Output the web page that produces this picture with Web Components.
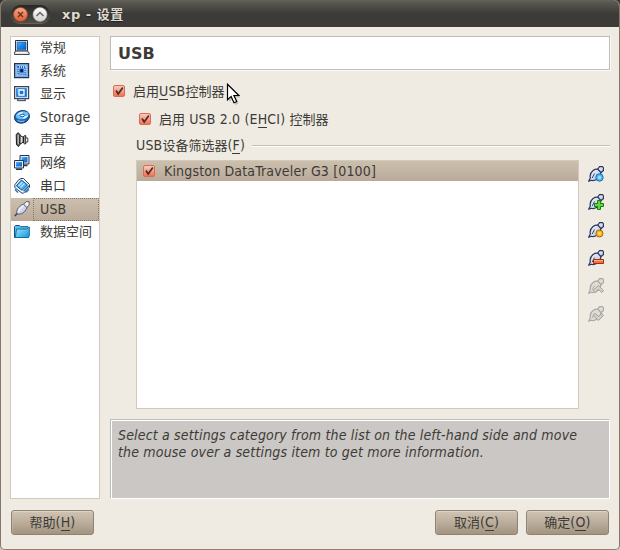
<!DOCTYPE html>
<html lang="zh-CN">
<head>
<meta charset="utf-8">
<title>xp - 设置</title>
<style>
html,body{margin:0;height:550px;overflow:hidden;background:linear-gradient(#3a3733 50%,#c9c6c0 50%)}
body{font:13px/17px "DejaVu Sans","Noto Sans CJK SC",sans-serif;color:#3c3b37}
</style>
</head>
<body>
<settings-window></settings-window>
<script>
const define=(name,html,init)=>customElements.define(name,class extends HTMLElement{
  constructor(){
    super();
    const t=document.createElement('template');
    t.innerHTML=html;
    this.attachShadow({mode:'open'}).append(t.content.cloneNode(true));
  }
  connectedCallback(){ if(init) init(this,this.shadowRoot); }
});

const defs=`<defs>
<linearGradient id="b" x1="0" y1="0" x2="1" y2="1"><stop offset="0" stop-color="#5cb4f8"/><stop offset=".5" stop-color="#1b83e6"/><stop offset="1" stop-color="#0a62c4"/></linearGradient>
<linearGradient id="c" x1="0" y1="0" x2="1" y2="1"><stop offset="0" stop-color="#a4f0fb"/><stop offset="1" stop-color="#1294dc"/></linearGradient>
<linearGradient id="g" x1="0" y1="0" x2="1" y2="1"><stop offset="0" stop-color="#fff"/><stop offset="1" stop-color="#aab4dc"/></linearGradient></defs>`;
const plug=(line,fill)=>`<g stroke="${line}" stroke-linejoin="round"><path d="M9.500 3.500L11.500.7h3.200l.8 1.300v2.500l-2.700 2.300z" fill="${fill}" stroke-width="1.200"/><path d="M.7 15.300L2.300 12c-.6-2.800.4-5.600 2.700-7.500 1.500-1 3.300-1.500 4.800-1.300l3 3.200c0 3-1.800 5.600-4.300 7.100-1.700 1-3.400 1.300-5 .8z" fill="${fill}" stroke-width="1.200"/><path d="M6.500 7.500L4.200 12" stroke-width=".9"/></g>`;
const icons={
general:`<path d="M1.500.5h12v10.500h-12z" fill="#f4f6fa" stroke="#26303f"/><path d="M3 2h9v7.500H3z" fill="url(#b)" stroke="#0b4a94" stroke-width=".6"/><path d="M1.500 11h12l1.700 2v1.500H.3V13z" fill="#d8dce4" stroke="#414753"/><path d="M2 12.800h11" stroke="#fff"/>`,
system:`<path d="M.6.6h14v14H.6z" fill="#8fbdf4" stroke="#26334a" stroke-width="1.200"/><path d="M2 2h11.200v11.200H2z" fill="#b5d6fa" stroke="#6f9fe0"/><path d="M4 4h7.200v7.200H4z" fill="none" stroke="#1f68cc" stroke-width="2" stroke-dasharray="1 1"/><path d="M5.800 5.800h3.600v3.600H5.800z" fill="#0b1220" stroke="#2f7ee0"/>`,
display:`<path d="M.6.6h14v12H.6z" fill="#e6ebf4" stroke="#39445a" stroke-width="1.200"/><path d="M2.500 2.500h10v8.200h-10z" fill="url(#b)" stroke="#3b83d8"/><path d="M5 4h5v5H5z" fill="#1674de" stroke="#fff" stroke-width="1.300"/><path d="M5 12.600h5l1.500 1v1.100h-8v-1.100z" fill="#bec4ce" stroke="#39445a"/>`,
storage:`<path d="M.5 8.500C.5 4 5 1.300 9.500 1.600c4 .3 6.200 2.900 5.900 5.900-.5 4.600-5 7-9.300 6.600C2.600 13.700.5 11.500.5 8.500z" fill="#1765b8" stroke="#16305b"/><ellipse cx="8.200" cy="6.300" rx="6.500" ry="3.900" transform="rotate(-10 8.200 6.300)" fill="#6bc0f8"/><path d="M3 5.500C5 3.500 7 3 9 3L8 5.500zM9 7.500l5-1c-.5 1.800-2.500 3-4.500 3.500z" fill="#d9f4ff"/><ellipse cx="8.300" cy="6.400" rx="2.300" ry="1.200" fill="#fff" stroke="#155cae"/><path d="M3.500 11.300c2 1.500 5 1.500 7 .5" stroke="#8bd4ff" fill="none"/>`,
audio:`<path d="M2.200 2.500L4.300.7l1.700 2v9.600l-1.500 2.200-2-1.800z" fill="#696969" stroke="#161616"/><path d="M4.200 3v9" stroke="#d5d5d5"/><path d="M6 3.500l3.200 1.700v5L6 12z" fill="#ddd" stroke="#222"/><path d="M9.500 4.500l1-.8h1.300v8.100h-1.300l-1-.8z" fill="#999" stroke="#222"/><path d="M12 6h1.800v4H12" fill="#eee" stroke="#444"/>`,
network:`<path d="M6 .5h9v8.500H6z" fill="#e7edf6" stroke="#26334a"/><path d="M7.500 2H13.500v5.500h-6z" fill="url(#b)"/><path d="M9 10.500h4.500" stroke="#26334a" stroke-width="1.500"/><path d="M.5 5.500h9V13h-9z" fill="#e7edf6" stroke="#26334a"/><path d="M2 7h6v4.500H2z" fill="url(#b)"/><path d="M2 14.300h6" stroke="#26334a" stroke-width="1.400"/>`,
serial:`<path d="M4.500 2L7 .5h2.500l6 6v2.700l-6 6H8L.8 9.500V6.800z" fill="#f5f9ff" stroke="#23406b"/><path d="M7.500 2L13.500 7 8 12.300 2.300 7.800z" fill="#4aaeed" stroke="#164f92"/><path d="M4.500 8l4-4M6.500 9.500l4-4" stroke="#b7e9ff" stroke-width="1.300"/><path d="M9.500 13.300l5.500-5.500M1 11.500l3 3M11.500 14.500l3.500-3" fill="none" stroke="#2470b0" stroke-width="1.400"/>`,
usb:`<path d="M.8 15L4 11.600" stroke="#444651" stroke-width="1.700"/><path d="M9.500 3.200L12.300.7h2.900v3.200L12.600 7z" fill="#f2f2f6" stroke="#5d5f70"/><path d="M3 12.800c-.9-3.500 1-6.800 6.300-9.800l3.800 3.700C10.800 11.800 7 14 3 12.800z" fill="url(#g)" stroke="#5b5d73"/><path d="M4.500 11C5 8.500 7 6.300 9 5" stroke="#fff" fill="none"/>`,
folder:`<path d="M.5 13.500v-11l1-1h4l1 1.200h7.500l.5.800v10z" fill="#55c4ef" stroke="#14508b"/><path d="M1.300 13.500L2.500 5h10.300l2.500-2v9l-1.300 1.500z" fill="url(#c)" stroke="#176a9f"/>`,
empty:plug('#28365c','url(#g)')+`<circle cx="11.500" cy="11.500" r="3.700" fill="#4eb6f4" stroke="#1272b4"/><circle cx="11.500" cy="11.500" r="1.700" fill="#9ce0ff"/>`,
add:plug('#28365c','url(#g)')+`<path d="M9.500 6.500h3v3h3v3h-3v3h-3v-3h-3v-3h3z" fill="#62d838" stroke="#16800f"/>`,
edit:plug('#28365c','url(#g)')+`<circle cx="11.500" cy="11.500" r="3.500" fill="#ffb51d" stroke="#a86406"/><circle cx="11.500" cy="11.500" r="1.400" fill="#ffe069"/>`,
remove:plug('#28365c','url(#g)')+`<path d="M5.500 9.500h10v4h-10z" fill="#ef7440" stroke="#a82c0b"/><path d="M6 10.500h9" stroke="#ffad82"/>`,
up:plug('#aaa8a2','#e0ddd7')+`<path d="M5 12.500l5.500-5 5 5-1.500 2-3.500-3-3.500 3z" fill="#d3d0ca" stroke="#a3a19c"/>`,
down:plug('#aaa8a2','#e0ddd7')+`<path d="M5 9.500l2-2 3.500 3 3.500-3 1.500 2-5 5z" fill="#d3d0ca" stroke="#a3a19c"/>`
};

define('ui-icon',`<style>:host{display:block;width:16px;height:16px;flex:none}svg{display:block}</style><svg width="16" height="16" viewBox="0 0 16 16" fill="none"></svg>`,
 (h,r)=>{r.querySelector('svg').innerHTML=defs+icons[h.getAttribute('name')]});

/* Latin runs are set taller and narrower than the Chinese text around them. */
define('latin-text',`<style>:host{font-family:"DejaVu Sans Condensed","DejaVu Sans",sans-serif;font-stretch:condensed;font-size:14px;letter-spacing:.17px}</style><slot></slot>`);

define('access-key',`<style>:host{display:inline-block;position:relative}:host::after{content:"";position:absolute;left:0;right:0;bottom:0;height:1px;background:currentColor}</style><slot></slot>`);

define('title-bar',`<style>
:host{display:flex;align-items:center;height:27px;box-sizing:border-box;padding:1px 0 0 10px;background:linear-gradient(#64625a,#57564f 3px,#3c3b37 14px,#3c3b37);font-weight:bold;color:#dfdbd2;text-shadow:0 1px 1px #222}
.pill{display:flex;align-items:center;gap:4px;width:39px;height:18px;box-sizing:border-box;padding:0 2px;border-radius:9px;background:linear-gradient(#282724,#4f4e49);box-shadow:0 1px 0 #64635d}
svg{display:block;flex:none}
.t{padding-left:12px;letter-spacing:.5px}
</style><div class="pill">
<svg width="15" height="15" viewBox="0 0 15 15"><defs><linearGradient id="o" x2="0" y2="1"><stop stop-color="#f9a988"/><stop offset="1" stop-color="#e5582c"/></linearGradient></defs><circle cx="7.500" cy="7.500" r="7" fill="url(#o)" stroke="#8f4328" stroke-width=".6"/><path d="M5 5l5 5M10 5l-5 5" stroke="#5b3526" stroke-width="1.300"/></svg>
<svg width="16" height="15" viewBox="0 0 16 15"><defs><linearGradient id="w" x2="0" y2="1"><stop stop-color="#fff"/><stop offset="1" stop-color="#d2d0cb"/></linearGradient></defs><circle cx="8" cy="7.500" r="7" fill="url(#w)" stroke="#aaa8a2" stroke-width=".6"/><path d="M4.500 9L8 5.500 11.500 9" fill="none" stroke="#666560" stroke-width="1.500"/></svg>
</div><div class="t"><slot></slot></div>`);

define('nav-item',`<style>
:host{display:flex;align-items:center;height:23px;padding-left:3px}
ui-icon{margin-top:-1px}
span{flex:1;margin-left:3px;padding-left:6px;height:21px;line-height:20px;border:1px solid transparent;white-space:nowrap}
:host([selected]){background:linear-gradient(#cdbfae,#b9aa99)}
:host([selected]) span{border:1px dotted #85796b}
</style><ui-icon></ui-icon><span><slot></slot></span>`,(h,r)=>r.querySelector('ui-icon').shadowRoot.querySelector('svg').innerHTML=defs+icons[h.getAttribute('icon')]);

define('check-box',`<style>
:host{display:flex;align-items:center;height:20px;white-space:nowrap}
svg{flex:none;margin-right:8px}
</style><svg width="12" height="12" viewBox="0 0 12 12"><defs><linearGradient id="r" x2="0" y2="1"><stop stop-color="#fbcfc2"/><stop offset="1" stop-color="#f46a4c"/></linearGradient></defs><rect x=".5" y=".5" width="11" height="11" rx="1.500" fill="url(#r)" stroke="#d96c54"/><path d="M3 5.500l2.200 3.500L9.800 2.500" fill="none" stroke="#40302a" stroke-width="1.700"/></svg><slot></slot>`);

define('push-button',`<style>
:host{display:flex;align-items:center;justify-content:center;width:83px;height:25px;box-sizing:border-box;border:1px solid #8f8371;border-radius:3px;background:linear-gradient(#d0c4b4,#bbad9b 50%,#a39480);box-shadow:inset 0 1px 0 #ddd3c7,inset 1px 0 0 #c8bcac80;white-space:nowrap}
</style><span><slot></slot></span>`);

define('mouse-pointer',`<style>:host{display:block;position:absolute;left:225px;top:83px}svg{display:block}</style>
<svg width="16" height="23" viewBox="0 0 16 23"><path d="M2 2v16l3.500-3.500 3 6.500 3-1.500-3-6h5z" fill="#0003" transform="translate(1 1)"/><path d="M1.500 1.200v15.600l3.600-3.400 2.900 6.400 2.800-1.300-2.900-6h5z" fill="#fff" stroke="#000" stroke-width="1.200"/></svg>`);

define('settings-window',`<style>
:host{display:flex;flex-direction:column;position:relative;width:620px;height:550px;box-sizing:border-box;border-left:1px solid #83786a;border-right:1px solid #83786a;border-bottom:1px solid #8f8269;border-radius:6px 6px 5px 5px;overflow:hidden;background:#efebe3}
.main{display:grid;grid-template-columns:90px 500px;gap:10px;padding:9px 0 0 9px;height:463px}
nav,.list{box-sizing:border-box;border:1px solid #d3c9b9;background:#fff}
.right{display:flex;flex-direction:column;min-width:0}
h1{margin:0;box-sizing:border-box;height:34px;padding:0 7px;border:1px solid #bebcb8;background:#fff;box-shadow:1px 1px 0 #fbfaf8;font-size:16px;line-height:33px}
.opts{padding:11px 0 0 3px}
.sub{margin:8px 0 0 26px}
.group{display:flex;align-items:center;height:20px;margin:6px 0 0 26px;white-space:nowrap}
.group i{flex:1;height:1px;margin-left:7px;background:#c4c0b8;box-shadow:0 1px #fff}
.filters{display:flex;margin:5px 0 0 26px;height:249px}
.list{width:443px}
.row{height:20px;padding-left:6px;background:linear-gradient(#cdbfae,#b9aa99)}
.row latin-text{margin-left:1px}
.tools{display:flex;flex-direction:column;gap:12px;padding:6px 0 0 9px}
.info{box-sizing:border-box;margin-top:10px;height:80px;padding:7px;border:1px solid #bebcb8;border-right-color:#fff;border-bottom-color:#fff;box-shadow:inset 1px 1px #fff;background:#cbc7c4;font-style:italic;line-height:17px;white-space:nowrap}
footer{display:flex;gap:8px;padding:11px 10px 0}
footer push-button:first-child{margin-right:auto}
</style>
<title-bar>xp - 设置</title-bar>
<div class="main">
<nav>
<nav-item icon="general">常规</nav-item><nav-item icon="system">系统</nav-item><nav-item icon="display">显示</nav-item><nav-item icon="storage"><latin-text>Storage</latin-text></nav-item><nav-item icon="audio">声音</nav-item><nav-item icon="network">网络</nav-item><nav-item icon="serial">串口</nav-item><nav-item icon="usb" selected><latin-text>USB</latin-text></nav-item><nav-item icon="folder">数据空间</nav-item>
</nav>
<div class="right">
<h1>USB</h1>
<div class="opts"><check-box><span>启用<latin-text><access-key>U</access-key>SB</latin-text>控制器</span></check-box>
<check-box class="sub"><span>启用<latin-text> USB 2.0 (E<access-key>H</access-key>CI) </latin-text>控制器</span></check-box></div>
<div class="group"><span><latin-text>USB</latin-text>设备筛选器<latin-text>(<access-key>F</access-key>)</latin-text></span><i></i></div>
<div class="filters"><div class="list"><div class="row"><check-box><latin-text>Kingston DataTraveler G3 [0100]</latin-text></check-box></div></div>
<div class="tools"><ui-icon name="empty"></ui-icon><ui-icon name="add"></ui-icon><ui-icon name="edit"></ui-icon><ui-icon name="remove"></ui-icon><ui-icon name="up"></ui-icon><ui-icon name="down"></ui-icon></div></div>
<div class="info"><latin-text>Select a settings category from the list on the left-hand side and move<br>the mouse over a settings item to get more information.</latin-text></div>
</div></div>
<footer><push-button>帮助<latin-text>(<access-key>H</access-key>)</latin-text></push-button><push-button>取消<latin-text>(<access-key>C</access-key>)</latin-text></push-button><push-button>确定<latin-text>(<access-key>O</access-key>)</latin-text></push-button></footer>
<mouse-pointer></mouse-pointer>`);
</script>
</body>
</html>
